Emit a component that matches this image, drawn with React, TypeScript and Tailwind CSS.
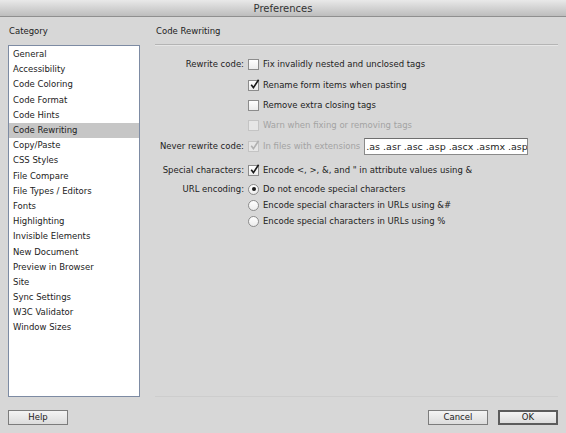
import React from "react";

const font = { fontFamily: '"DejaVu Sans", "Lucida Grande", sans-serif' };

const categories = [
  "General",
  "Accessibility",
  "Code Coloring",
  "Code Format",
  "Code Hints",
  "Code Rewriting",
  "Copy/Paste",
  "CSS Styles",
  "File Compare",
  "File Types / Editors",
  "Fonts",
  "Highlighting",
  "Invisible Elements",
  "New Document",
  "Preview in Browser",
  "Site",
  "Sync Settings",
  "W3C Validator",
  "Window Sizes",
];

function Check({ checked, disabled }: { checked?: boolean; disabled?: boolean }) {
  return (
    <span
      className={
        "relative inline-block w-[11px] h-[11px] shrink-0 border " +
        (disabled
          ? "border-[#c4c4c4] bg-[#e6e6e6]"
          : "border-[#8c8c8c] bg-gradient-to-b from-[#ffffff] to-[#ececec]")
      }
    >
      {checked && (
        <svg viewBox="0 0 11 11" className="absolute left-[0px] top-[-2px] w-[11px] h-[11px] overflow-visible">
          <path
            d="M2.2 5.8 L4.4 8.6 L9.6 0.8"
            fill="none"
            stroke={disabled ? "#b0b0b0" : "#1a1a1a"}
            strokeWidth="1.6"
          />
        </svg>
      )}
    </span>
  );
}

function Radio({ on }: { on?: boolean }) {
  return (
    <span className="relative inline-flex items-center justify-center w-[11px] h-[11px] shrink-0 rounded-full border border-[#8c8c8c] bg-gradient-to-b from-[#ffffff] to-[#ececec]">
      {on && <span className="w-[4px] h-[4px] rounded-full bg-[#1a1a1a]" />}
    </span>
  );
}

function Row({
  label,
  children,
  className = "",
}: {
  label?: string;
  children: React.ReactNode;
  className?: string;
}) {
  return (
    <div className={"flex items-center " + className}>
      <div className="w-[93px] shrink-0 text-right pr-[4px] text-[#222]">{label}</div>
      <div className="flex items-center gap-[4px]">{children}</div>
    </div>
  );
}

function Btn({ children, def }: { children: React.ReactNode; def?: boolean }) {
  return (
    <div
      className={
        "w-[60px] h-[15px] flex items-center justify-center text-[8.5px] text-[#222] bg-gradient-to-b from-[#f4f4f4] to-[#dcdcdc] " +
        (def ? "border-2 border-[#5c5c5c]" : "border border-[#7c7c7c]")
      }
    >
      {children}
    </div>
  );
}

export default function App() {
  return (
    <div
      className="w-[566px] h-[433px] bg-[#d7d7d7] flex flex-col text-[8.5px] leading-[11px] text-[#222] overflow-hidden"
      style={font}
    >
      <div className="h-[17px] shrink-0 flex items-center justify-center bg-gradient-to-b from-[#e9e9e9] to-[#bdbdbd] border-b border-[#8f8f8f] text-[10px] text-[#333]">
        Preferences
      </div>
      <div className="flex flex-1">
        <div className="w-[140px] shrink-0 pl-[8px] pt-[9px] flex flex-col">
          <div className="pl-[1px] h-[11px] text-[#222]">Category</div>
          <div className="mt-[8px] h-[352px] border border-[#7d8ba3] bg-white pt-[1px]">
            {categories.map((c) => (
              <div
                key={c}
                className={
                  "h-[15.2px] flex items-center pl-[4px] " +
                  (c === "Code Rewriting" ? "bg-[#c6c6c6]" : "")
                }
              >
                {c}
              </div>
            ))}
          </div>
        </div>
        <div className="flex-1 pl-[15px] pr-[8px] pt-[9px] flex flex-col">
          <div className="pl-[1px] h-[11px]">Code Rewriting</div>
          <div className="mt-[7px] h-[2px] border-t border-[#b4b4b4] border-b border-b-[#e6e6e6]" />
          <div className="flex flex-col h-[351px] border-b border-[#cdcdcd]">
            <Row label="Rewrite code:" className="h-[20px] mt-[8px]">
              <Check />
              <span>Fix invalidly nested and unclosed tags</span>
            </Row>
            <Row className="h-[20px] mt-[1px]">
              <Check checked />
              <span>Rename form items when pasting</span>
            </Row>
            <Row className="h-[20px]">
              <Check />
              <span>Remove extra closing tags</span>
            </Row>
            <Row className="h-[20px]">
              <Check disabled />
              <span className="text-[#a3a3a3]">Warn when fixing or removing tags</span>
            </Row>
            <Row label="Never rewrite code:" className="h-[20px] mt-[1px]">
              <Check checked disabled />
              <span className="text-[#a3a3a3]">In files with extensions</span>
              <div className="w-[164px] h-[17px] bg-white border border-[#8a8a8a] border-t-[#6e6e6e] overflow-hidden whitespace-nowrap flex items-center pl-[1px] text-[9.5px] text-[#222]">
                .as .asr .asc .asp .ascx .asmx .aspx .ashx
              </div>
            </Row>
            <Row label="Special characters:" className="h-[20px] mt-[4px]">
              <Check checked />
              <span>Encode &lt;, &gt;, &amp;, and " in attribute values using &amp;</span>
            </Row>
            <Row label="URL encoding:" className="h-[16px] mt-[1px]">
              <Radio on />
              <span>Do not encode special characters</span>
            </Row>
            <Row className="h-[16px]">
              <Radio />
              <span>Encode special characters in URLs using &amp;#</span>
            </Row>
            <Row className="h-[16px]">
              <Radio />
              <span>Encode special characters in URLs using %</span>
            </Row>
          </div>
        </div>
      </div>
      <div className="h-[37px] shrink-0 flex items-start pt-[13px] px-[8px]">
        <Btn>Help</Btn>
        <div className="flex-1" />
        <Btn>Cancel</Btn>
        <div className="w-[10px]" />
        <Btn def>OK</Btn>
      </div>
    </div>
  );
}
